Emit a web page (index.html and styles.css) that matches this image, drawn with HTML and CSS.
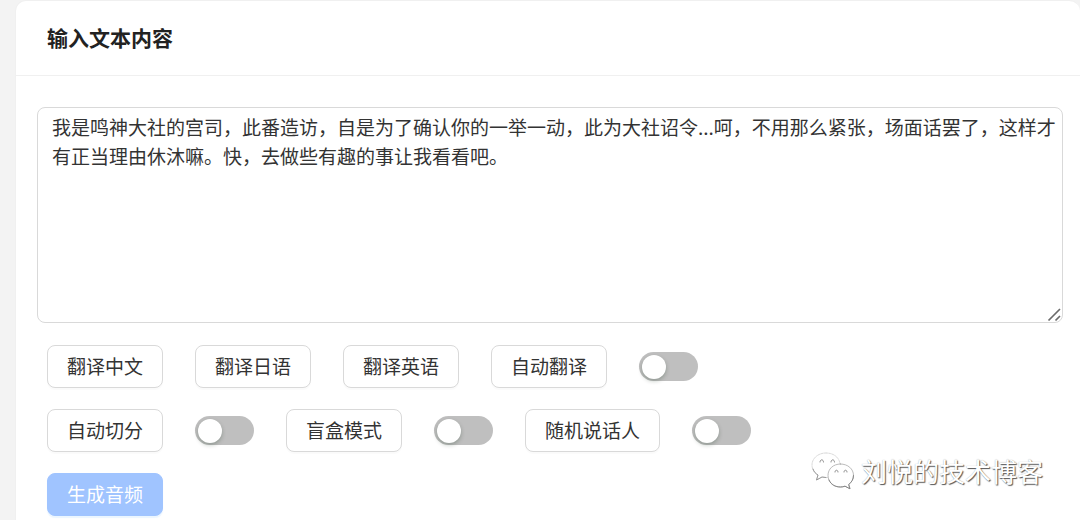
FILE: index.html
```html
<!DOCTYPE html>
<html lang="zh-CN">
<head>
<meta charset="utf-8">
<title>输入文本内容</title>
<link rel="stylesheet" href="styles.css">
</head>
<body>
<main class="card">
  <header class="card-header"><h1 class="card-title" id="title">输入文本内容</h1></header>
  <div class="card-body">
    <div class="editor">
      <textarea class="editor-input" aria-labelledby="title" spellcheck="false">我是鸣神大社的宫司，此番造访，自是为了确认你的一举一动，此为大社诏令...呵，不用那么紧张，场面话罢了，这样才有正当理由休沐嘛。快，去做些有趣的事让我看看吧。</textarea>
      <svg class="grip" width="16" height="16" viewBox="0 0 16 16" aria-hidden="true"><path d="M1.500 13.500 13 2M8.500 13.500 13 9" fill="none" stroke="#6b6b6b" stroke-width="1.700"/></svg>
    </div>
    <div class="actions">
      <div class="row">
        <button class="btn" type="button">翻译中文</button>
        <button class="btn" type="button">翻译日语</button>
        <button class="btn" type="button">翻译英语</button>
        <button class="btn" type="button" id="auto-translate">自动翻译</button>
        <input class="switch" type="checkbox" role="switch" aria-labelledby="auto-translate">
      </div>
      <div class="row">
        <button class="btn" type="button" id="auto-split">自动切分</button>
        <input class="switch" type="checkbox" role="switch" aria-labelledby="auto-split">
        <button class="btn" type="button" id="blind-box">盲盒模式</button>
        <input class="switch" type="checkbox" role="switch" aria-labelledby="blind-box">
        <button class="btn" type="button" id="random-speaker">随机说话人</button>
        <input class="switch" type="checkbox" role="switch" aria-labelledby="random-speaker">
      </div>
      <div class="row">
        <button class="btn btn-primary" type="button">生成音频</button>
      </div>
    </div>
  </div>
</main>
<div class="watermark">
  <svg class="watermark-logo" width="44" height="38" viewBox="0 0 44 38" aria-hidden="true">
    <g fill="#fff" stroke-linecap="round" stroke-linejoin="round">
      <path d="M15 1C7 1 1 6.500 1 13c0 4 2 7.500 6 10l-1.500 5 5.500-3c1.500.4 3 .5 4.500.5C23 25.500 29 20 29 13S23 1 15 1z" stroke="#d0d0d0" stroke-width=".8" stroke-dasharray="2 1"/>
      <path d="M2 17c1 3 2.500 4.500 5 6l-1.500 5 5.500-3 4 .5" fill="none" stroke="#999"/>
      <path d="M29.500 12C22 12 17 17 17 23.500S22.500 35 29.500 35c1.500 0 3-.3 4.500-.8l5 2.600-1.300-4.300c3-2.300 4.800-5.300 4.800-9C42.500 17 37 12 29.500 12z" stroke="#aaa" stroke-width=".8"/>
      <path d="M18 28c2 5 6.500 7 11.500 7 1.500 0 3-.3 4.500-.8l5 2.600-1.300-4.300c3-2.300 4.800-5.300 4.800-9" fill="none" stroke="#888"/>
      <path d="M9 10c0-3 3.500-3 3.500 0M20 10c0-3 3.500-3 3.500 0M24 20c0-2.500 3-2.500 3 0M33 20c0-2.500 3-2.500 3 0" fill="none" stroke="#888"/>
    </g>
  </svg>
  <span class="watermark-text">刘悦的技术博客</span>
</div>
</body>
</html>
```
FILE: styles.css
```css
* {
  box-sizing: border-box;
}

body {
  margin: 0;
  padding-left: 15px;
  background: #f3f3f3;
  color: #222;
  font-family: "Noto Sans CJK SC", "Liberation Sans", sans-serif;
  font-size: 19px;
  overflow: hidden;
}

.card {
  min-height: 100vh;
  background: #fff;
  border: 1px solid #f0f0f0;
  border-bottom: 0;
  border-right: 0;
  border-radius: 11px 11px 0 0;
}

.card-header {
  padding: 21px 31px 23px;
  border-bottom: 1px solid #f0f0f0;
}

.card-title {
  margin: 0;
  font-size: 21px;
  line-height: 30px;
  font-weight: 700;
}

.card-body {
  padding: 31px 17px 5px 21px;
}

.editor {
  position: relative;
}

.editor-input {
  display: block;
  width: 100%;
  height: 216px;
  padding: 4px 4px 4px 14px;
  border: 1px solid #d9d9d9;
  border-radius: 8px;
  outline: 0;
  resize: none;
  overflow: hidden;
  background: #fff;
  color: #333;
  font: inherit;
  line-height: 29px;
}

.grip {
  position: absolute;
  right: 0;
  bottom: 0;
}

.actions {
  display: flex;
  flex-direction: column;
  gap: 21px;
  padding: 22px 10px 0;
}

.row {
  display: flex;
  flex-wrap: wrap;
  align-items: center;
  gap: 21px 32px;
}

.btn {
  height: 43px;
  padding: 0 19px 2px;
  border: 1px solid #d9d9d9;
  border-radius: 8px;
  background: #fff;
  box-shadow: 0 2px 1px rgba(0, 0, 0, 0.02);
  color: #333;
  font: inherit;
  line-height: 28px;
}

.btn-primary {
  border-color: #a0c4ff;
  background: #a0c4ff;
  box-shadow: 0 2px 1px rgba(5, 145, 255, 0.08);
  color: #fff;
}

.switch {
  appearance: none;
  display: flex;
  align-items: center;
  width: 59px;
  height: 29px;
  margin: 0;
  padding: 0 3px;
  border-radius: 15px;
  background: #bfbfbf;
}

.switch::before {
  content: "";
  width: 24px;
  height: 24px;
  border-radius: 50%;
  background: #fff;
  box-shadow: 0 2px 4px rgba(0, 35, 11, 0.25);
}

.switch:checked {
  justify-content: flex-end;
  background: #1677ff;
}

.watermark {
  position: absolute;
  right: 37px;
  bottom: 30px;
  display: flex;
  align-items: center;
  gap: 6px;
}

.watermark-text {
  color: #fff;
  font-size: 26px;
  line-height: 38px;
  text-shadow: 1px 1px 1px #555, 0 0 1px #aaa;
}
```
